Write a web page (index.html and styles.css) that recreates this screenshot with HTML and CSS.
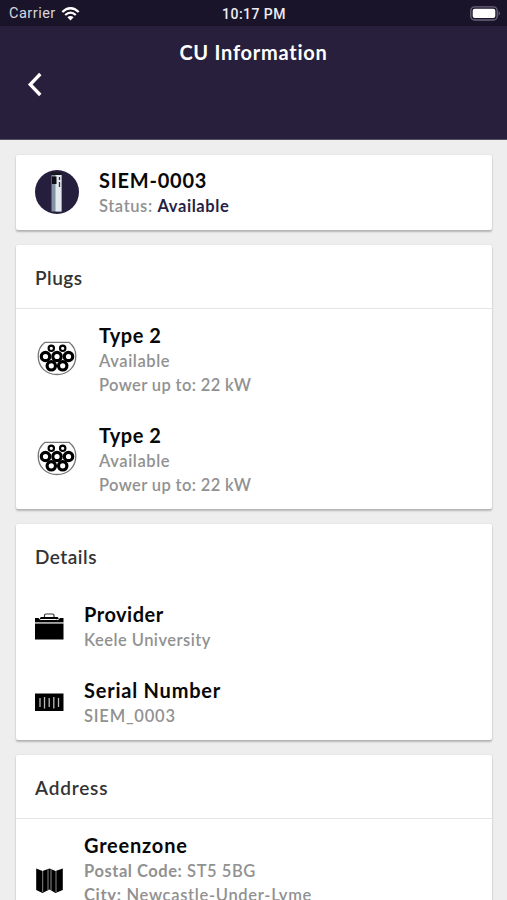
FILE: index.html
```html
<!DOCTYPE html>
<html lang="en">
<head>
<meta charset="utf-8">
<title>CU Information</title>
<link rel="stylesheet" href="styles.css">
</head>
<body>
<svg class="defs" width="0" height="0">
  <symbol id="plug" viewBox="0 0 40 34">
    <path d="M8 .8H32Q38.800 6 38.800 14.500C38.800 25.500 31 33 20 33S1.200 25.500 1.200 14.500Q1.200 6 8 .8Z" fill="#fff" stroke="#777" stroke-width="1.300"/>
    <g fill="#fff" stroke="#000">
      <g stroke-width="2.100"><circle cx="14.300" cy="6.800" r="2.700"/><circle cx="25.700" cy="6.800" r="2.700"/></g>
      <g stroke-width="3.200"><circle cx="8.500" cy="15" r="4.200"/><circle cx="20" cy="15" r="4.200"/><circle cx="31.500" cy="15" r="4.200"/><circle cx="14.300" cy="24.300" r="4.200"/><circle cx="25.700" cy="24.300" r="4.200"/></g>
    </g>
  </symbol>
</svg>
<div class="status-bar">
  <div class="carrier"><span>Carrier</span>
    <svg width="19" height="14" viewBox="0 0 18 14"><g fill="none" stroke="#fff" stroke-width="2.300"><path d="M.8 5Q9-2.600 17.200 5"/><path d="M3.700 8Q9 3.300 14.300 8"/></g><path d="M5.900 10.300Q9 7.700 12.100 10.300L9 13.600Z" fill="#fff"/></svg>
  </div>
  <div class="time">10:17 PM</div>
  <svg class="battery" width="31" height="15" viewBox="0 0 31 15"><rect x=".8" y=".8" width="26.400" height="13.200" rx="3.800" fill="none" stroke="#6d667a" stroke-width="1.300"/><rect x="2.700" y="2.700" width="22.600" height="9.400" rx="2" fill="#fff"/><path d="M28.700 5Q31 7.400 28.700 9.800Z" fill="#777083"/></svg>
</div>
<header class="header">
  <h1>CU Information</h1>
  <svg class="back" width="16" height="25" viewBox="0 0 16 25"><path d="M13.300 2L3.200 12.500L13.300 23" fill="none" stroke="#fff" stroke-width="3.300"/></svg>
</header>
<main>
  <section class="card unit">
    <svg class="avatar" width="44" height="44" viewBox="0 0 44 44"><circle cx="22" cy="22" r="22" fill="#261e3d"/><path d="M16.500 3.500L26.500 4.500V41.500H16.500Z" fill="#8293a4"/><path d="M20.500 4.500H26.500V41.500H20.500Z" fill="#e2e8ee"/><path d="M15.500 2.500H26L27 5H16Z" fill="#18171e"/><path d="M17 6.500H21.500V14H17Z" fill="#0d0d17"/><path d="M24.500 7V10M24.500 12V17" stroke="#303040" stroke-width="1.300"/></svg>
    <div><h3 class="wide">SIEM-0003</h3><p>Status: <b>Available</b></p></div>
  </section>
  <section class="card">
    <h2 class="ruled">Plugs</h2>
    <div class="row plug"><svg width="40" height="35"><use href="#plug"/></svg><div><h3>Type 2</h3><p>Available</p><p class="power">Power up to: 22 kW</p></div></div>
    <div class="row plug"><svg width="40" height="35"><use href="#plug"/></svg><div><h3>Type 2</h3><p>Available</p><p class="power">Power up to: 22 kW</p></div></div>
  </section>
  <section class="card details">
    <h2>Details</h2>
    <div class="row"><svg width="29" height="27" viewBox="0 0 29 27"><path d="M9.500 5V2.500Q9.500 1 11 1H17.500Q19 1 19 2.500V5" fill="none" stroke="#333" stroke-width="1.200"/><path d="M0 5H5L6 4H22.500L23.500 5H28.500V9.200H0ZM0 10.500H28.500V26.500H0Z"/><path d="M4 5Q5 7.500 7 6.500H21.500Q23.500 7.500 24.500 5" fill="none" stroke="#fff"/><path d="M0 9.800H28.500" stroke="#999"/></svg><div><h3>Provider</h3><p class="provider">Keele University</p></div></div>
    <div class="row"><svg width="29" height="18" viewBox="0 0 29 18"><path d="M0 .5H28.500V18H0Z"/><path d="M5 5V14M9.500 4V15.500M14.200 5V14M18.800 4V15.500M23.500 5V14" stroke="#bbb" stroke-width="1.300"/></svg><div><h3 class="wide">Serial Number</h3><p class="serial">SIEM_0003</p></div></div>
  </section>
  <section class="card address">
    <h2 class="ruled">Address</h2>
    <div class="row"><svg width="29" height="26" viewBox="0 0 29 26"><path d="M1.200 .5L7.500 3L14.500 .5L20.500 3L27.800 .5V22L20.500 25L14.500 21.500L7.500 25L1.200 22Z"/><path d="M7.700 3V24M13 1.500V22M16 1.500V22M21 3V24" stroke="#999" stroke-width=".9"/></svg><div><h3 class="wide">Greenzone</h3><p class="postal"><b>Postal Code:</b> ST5 5BG</p><p class="city"><b>City:</b> Newcastle-Under-Lyme</p></div></div>
  </section>
</main>
</body>
</html>
```
FILE: styles.css
```css
* { box-sizing: border-box; }
html, body { height: 900px; overflow: hidden; }
body { margin: 0; background: #eee; font-family: Lato, "Liberation Sans", sans-serif; color: #080808; }
h1, h2, h3, p { margin: 0; white-space: nowrap; }
svg { display: block; flex: none; }
.defs { position: absolute; }
.status-bar { height: 26px; background: #19142a; color: #eeecf2; display: grid; grid-template-columns: 1fr auto 1fr; align-items: center; padding: 1px 6px 0 9px; font: 14px Roboto, sans-serif; }
.carrier { display: flex; gap: 5px; align-items: center; font-size: 14.500px; letter-spacing: .5px; color: #d8d6de; }
.time { font-weight: 500; letter-spacing: .45px; margin-left: -2px; }
.battery { justify-self: end; }
.header { height: 114px; background: #271f3c; padding-top: 13px; border-bottom: 1px solid #575064; color: #fff; }
h1 { text-align: center; font-size: 20px; line-height: 26px; font-weight: 700; letter-spacing: .75px; }
.back { margin: 7px 0 0 27px; }
main { height: 760px; overflow: hidden; padding: 15px 15px 0 16px; display: flex; flex-direction: column; gap: 15px; }
.card { background: #fff; border-radius: 2px; box-shadow: 0 2px 2px rgba(0,0,0,.23), 0 0 2px rgba(0,0,0,.1); height: 264px; flex: none; }
.unit { height: 75px; display: flex; gap: 20px; padding: 12px 19px; }
.unit .avatar { margin-top: 3px; }
h2 { height: 64px; line-height: 65px; padding-left: 19px; font-size: 19px; font-weight: 600; color: #333; letter-spacing: .5px; }
.address h2 { letter-spacing: .8px; }
.ruled { border-bottom: 1px solid #e5e5e5; }
h3 { font-size: 20px; line-height: 26px; font-weight: 700; letter-spacing: .5px; }
.wide { letter-spacing: .78px; }
p { font-size: 16.500px; line-height: 24.500px; font-weight: 600; color: #919191; letter-spacing: .6px; }
h3 + p { margin-top: 1px; }
.power { letter-spacing: .37px; }
.provider { letter-spacing: .47px; }
.serial { letter-spacing: .8px; }
.postal { letter-spacing: .55px; }
.city { letter-spacing: .69px; }
.unit b { color: #271f45; font-weight: 700; }
.row { display: flex; align-items: center; gap: 20px; padding: 2px 0 0 19px; height: 76px; }
.row > svg { margin-top: -2px; }
.plug { height: 100px; gap: 22px; padding: 1px 0 0 21px; }
.plug > svg { margin-top: -3px; }
.details { height: 216px; }
.address { height: 200px; }
.address .row { height: 100px; padding-top: 1px; }
.address .row svg { margin-top: 23px; }
.address b { font-weight: 700; }
```
